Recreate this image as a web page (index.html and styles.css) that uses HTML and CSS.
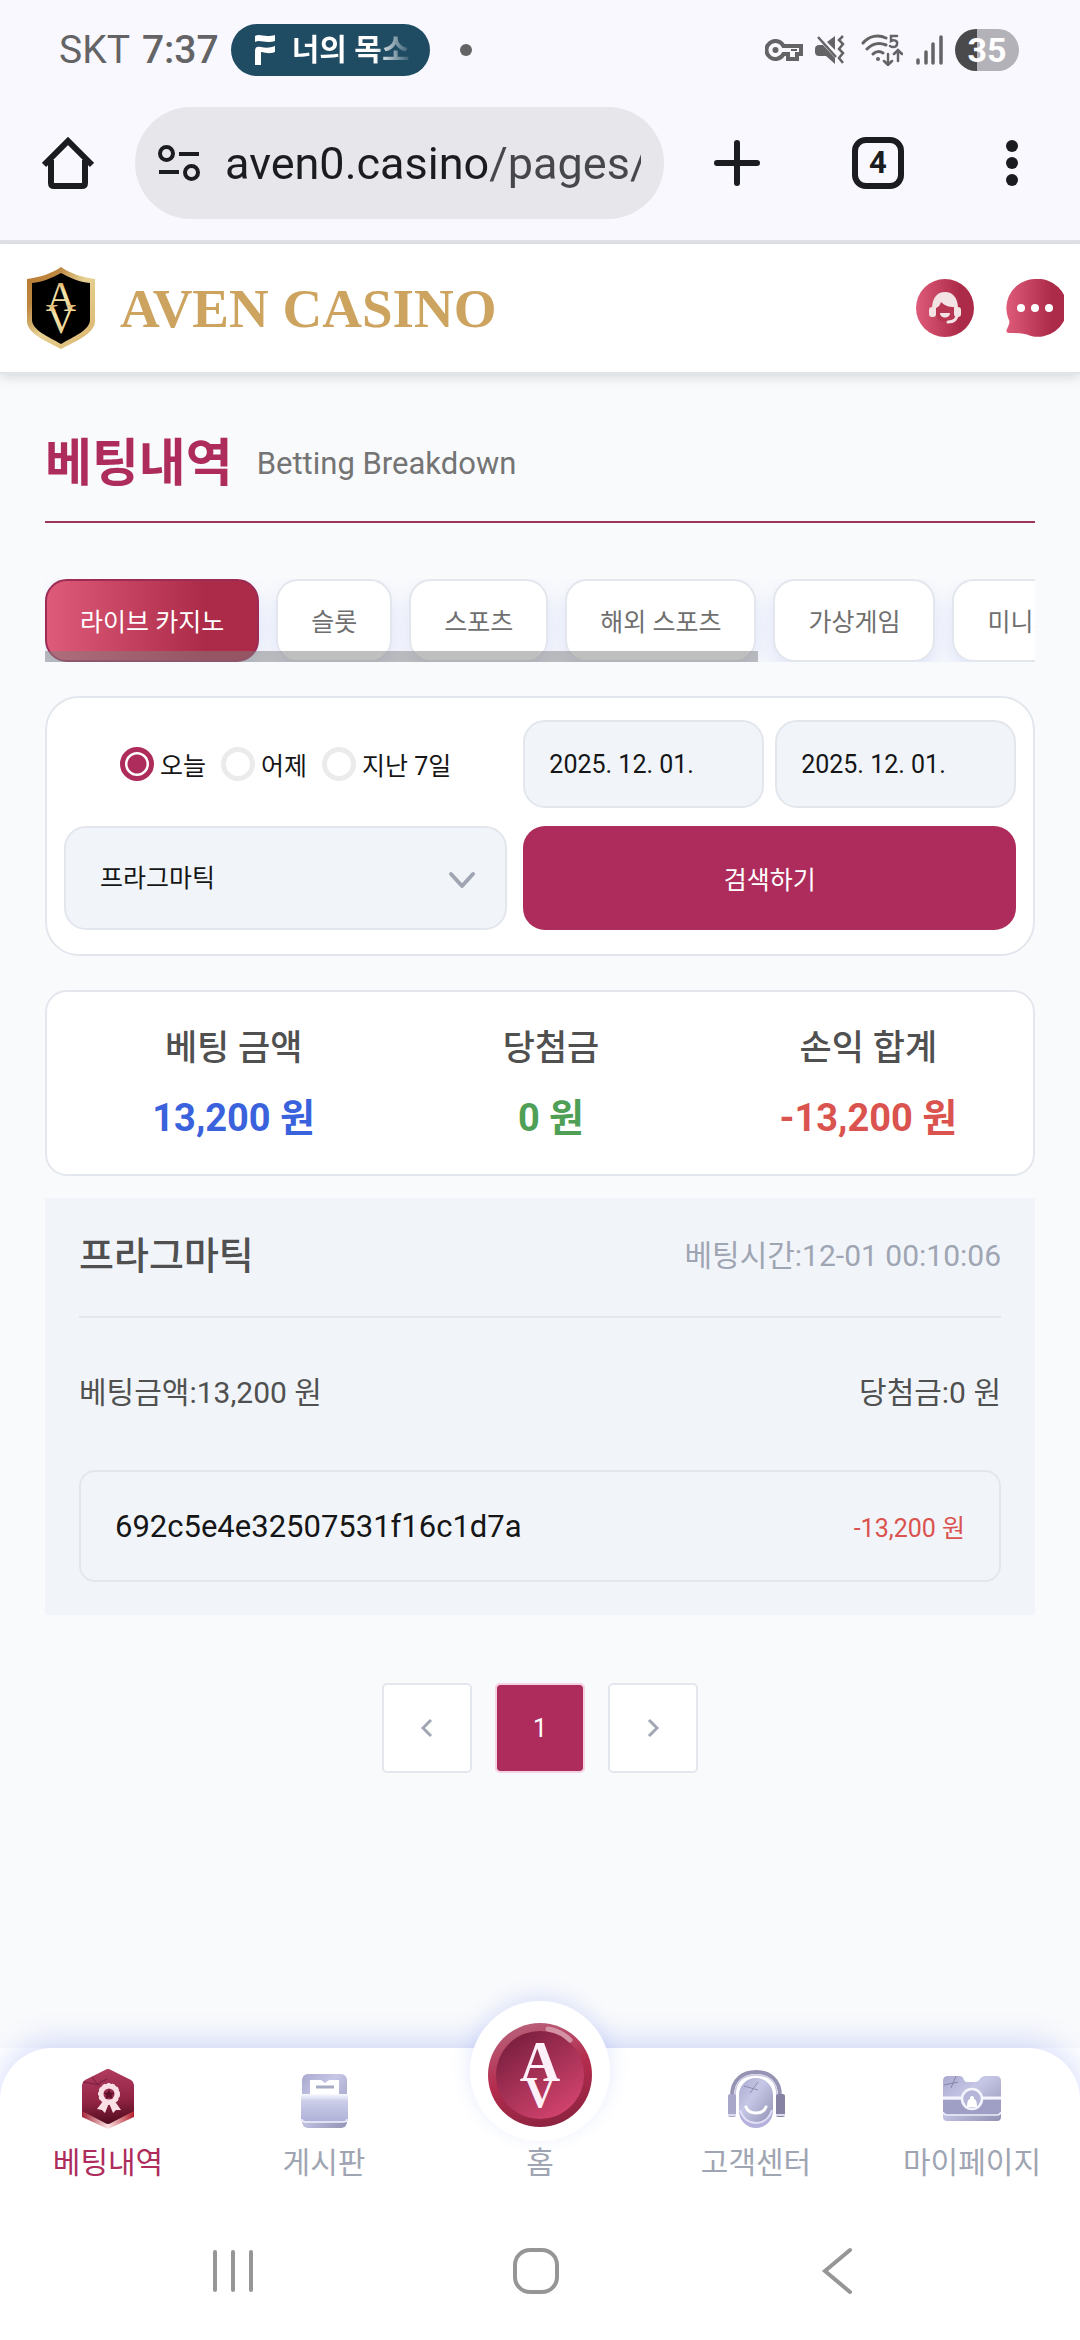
FILE: index.html
```html
<!DOCTYPE html>
<html lang="ko">
<head>
  <meta charset="UTF-8" />
  <meta name="viewport" content="width=device-width, initial-scale=1.0" />
  <title>베팅내역 - AVEN CASINO</title>
  <link rel="stylesheet" href="styles.css">
</head>
<body>
  <!-- Phone status bar -->
  <div class="status-bar">
    <span class="carrier">SKT</span>
    <span class="clock">7:37</span>
    <div class="chip">
      <svg width="22" height="32" viewBox="0 0 22 32" fill="#fff">
        <path d="M1 2c5-3 9 2 20-1v6c-10 3-15-2-20 1z"/>
        <path d="M1 17c0-4 2-5 6-4 5 1 9 1 14-1v6c-5 2-9 1-13 0-1 0-1 0-1 1v12H1z"/>
      </svg>
      <span class="chip-text">너의 목소</span>
    </div>
    <span class="dot"></span>

    <div class="status-icons">
      <svg width="38" height="22" viewBox="0 0 38 22" fill="none" stroke="#646466" stroke-width="4">
        <path d="M18.500 7A9 9 0 1 0 18.500 15H23V20H32V15H36V7Z"/>
        <circle cx="10.500" cy="11" r="3" fill="#646466" stroke="none"/>
        <path d="M26 11h6" stroke-width="2"/>
      </svg>
      <svg class="icon-mute" width="30" height="30" viewBox="0 0 30 30" fill="#646466">
        <path d="M0 14c0-3 2-4 4-4h4l12 13v6l-9-8H4c-2 0-4-1-4-4z"/>
        <path d="M20 1v14l-8-8z"/>
        <path d="M3 2l18 20" stroke="#646466" stroke-width="2.500"/>
        <path d="M28 1l-4 4 4 4-4 5 4 4-4 5 4 5" fill="none" stroke="#646466" stroke-width="2.500"/>
      </svg>
      <svg class="icon-wifi" width="42" height="32" viewBox="0 0 42 32" fill="none" stroke="#646466" stroke-width="3" stroke-linecap="round">
        <path d="M2 9C8 2 17 0 25 4M6 15c5-5 12-7 19-4M12 20c3-3 7-3 10-1"/>
        <circle cx="17" cy="25" r="2" fill="#646466" stroke="none"/>
        <path d="M36 2h-6v5c3-2 7 0 6 3 0 3-4 4-7 2" stroke-width="2.500"/>
        <path d="M27 20v10m-4-3l4 4 4-4M37 27V17m-4 3l4-4 4 4" stroke-width="2.500"/>
      </svg>
      <svg width="28" height="30" viewBox="0 0 28 30" stroke="#646466" stroke-width="3.500" stroke-linecap="round">
        <path d="M3 25v3M11 17v11M18 9v19M26 2v26"/>
      </svg>
      <span class="battery">35</span>
    </div>
  </div>

  <!-- Browser toolbar -->
  <div class="toolbar">
    <button class="icon-btn" aria-label="Home">
      <svg width="52" height="52" viewBox="0 0 52 52" fill="none" stroke="#1b1c20" stroke-width="6">
        <path d="M2 28L26 4l24 24" stroke-linejoin="miter"/>
        <path d="M9 23v23q0 3 3 3h28q3 0 3-3V23"/>
      </svg>
    </button>
    <div class="url-bar">
      <svg width="42" height="38" viewBox="0 0 42 38" fill="none" stroke="#1b1c20" stroke-width="4">
        <circle cx="8.500" cy="9.500" r="6.500"/>
        <path d="M21 10h20M1 28h20"/>
        <circle cx="33.500" cy="28.500" r="6.500"/>
      </svg>
      <input class="url" type="text" aria-label="Address" value="aven0.casino/pages/" />
    </div>
    <div class="toolbar-actions">
      <button class="icon-btn" aria-label="New tab">
        <svg width="46" height="46" viewBox="0 0 46 46" stroke="#1b1c20" stroke-width="6" stroke-linecap="round">
          <path d="M23 3v40M3 23h40"/>
        </svg>
      </button>
      <button class="tab-count" aria-label="Tabs">4</button>
      <button class="icon-btn" aria-label="Menu">
        <svg width="32" height="52" viewBox="0 0 32 52" fill="#1b1c20">
          <circle cx="16" cy="9" r="6"/>
          <circle cx="16" cy="26" r="6"/>
          <circle cx="16" cy="43" r="6"/>
        </svg>
      </button>
    </div>
  </div>

  <!-- Site header -->
  <header class="header">
    <a class="brand" href="#">
      <svg width="70" height="84" viewBox="0 0 70 84">
        <defs>
          <linearGradient id="gold" x1="0" y1="0" x2="1" y2="1">
            <stop offset="0" stop-color="#b87a30"/>
            <stop offset=".25" stop-color="#bd8740"/>
            <stop offset=".5" stop-color="#e6d193"/>
            <stop offset="1" stop-color="#d9b26a"/>
          </linearGradient>
          <linearGradient id="goldText" x1="0" y1="0" x2="0" y2="1">
            <stop offset="0" stop-color="#c98b3d"/>
            <stop offset=".4" stop-color="#f5e6ab"/>
            <stop offset="1" stop-color="#e3c985"/>
          </linearGradient>
        </defs>
        <path d="M35 1C25 8 14 11 1 13v42c0 13 21 21 34 28 13-7 34-15 34-28V13C56 11 45 8 35 1z" fill="url(#gold)"/>
        <path d="M35 7c-9 5-18 9-29 10v37c0 10 17 17 29 24 12-7 29-14 29-24V17C53 16 44 12 35 7z" fill="#000"/>
        <text x="35" y="45" class="mark mark-gold">A</text>
        <text x="35" y="67" class="mark mark-gold">V</text>
      </svg>
      <span class="brand-name">AVEN CASINO</span>
    </a>
    <div class="header-actions">
      <button class="icon-btn" aria-label="상담">
        <svg width="58" height="58" viewBox="0 0 58 58">
          <defs>
            <linearGradient id="rose" x1="0" y1="0" x2="1" y2="0">
              <stop offset="0" stop-color="#de5b79"/>
              <stop offset=".75" stop-color="#ac2b48"/>
            </linearGradient>
          </defs>
          <circle cx="29" cy="29" r="29" fill="url(#rose)"/>
          <path d="M16 30c0-11 5-17 13-17s13 6 13 17" fill="#f3e3e4"/>
          <path d="M20 29c3-1 4-3 5-6 4 4 8 5 13 5v6c0 6-4 9-9 9s-9-3-9-9z" fill="#b73652"/>
          <rect x="13" y="28" width="7" height="10" rx="3" fill="#f3e3e4"/>
          <rect x="38" y="28" width="7" height="10" rx="3" fill="#f3e3e4"/>
          <path d="M24 34h10c0 6-10 6-10 0z" fill="#f3e3e4"/>
          <path d="M41 35c0 6-4 8-9 8" fill="none" stroke="#f3e3e4" stroke-width="3" stroke-linecap="round"/>
        </svg>
      </button>
      <button class="icon-btn" aria-label="메시지">
        <svg width="58" height="58" viewBox="0 0 58 58">
          <path d="M29 0a29 29 0 1 1-4 57c-8-3-15-3-22-3-3 0-3-2-2-4 2-4 3-7 2-9A29 29 0 0 1 29 0z" fill="url(#rose)"/>
          <g fill="#fff">
            <circle cx="15" cy="29" r="4"/>
            <circle cx="29" cy="29" r="4"/>
            <circle cx="43" cy="29" r="4"/>
          </g>
        </svg>
      </button>
    </div>
  </header>

  <main class="content">
    <div class="page-title">
      <h1>베팅내역</h1>
      <span>Betting Breakdown</span>
    </div>

    <div class="tabs-wrap">
      <div class="tabs">
        <button class="tab active">라이브 카지노</button>
        <button class="tab">슬롯</button>
        <button class="tab">스포츠</button>
        <button class="tab">해외 스포츠</button>
        <button class="tab">가상게임</button>
        <button class="tab">미니게임</button>
      </div>
      <div class="scroll-thumb"></div>
    </div>

    <form class="card filter" onsubmit="return false">
      <div class="range">
        <label><input type="radio" name="range" checked />오늘</label>
        <label><input type="radio" name="range" />어제</label>
        <label><input type="radio" name="range" />지난 7일</label>
      </div>
      <div class="dates">
        <input type="text" class="field date" aria-label="시작일" value="2025. 12. 01." />
        <input type="text" class="field date" aria-label="종료일" value="2025. 12. 01." />
      </div>
      <div class="select-wrap">
        <select class="field" aria-label="게임사">
          <option>프라그마틱</option>
        </select>
        <svg class="arrow" width="28" height="18" viewBox="0 0 28 18" fill="none" stroke="#9fa5b2" stroke-width="4" stroke-linecap="round" stroke-linejoin="round">
          <path d="M3 3l11 12L25 3"/>
        </svg>
      </div>
      <button class="search-btn" type="submit">검색하기</button>
    </form>

    <section class="card summary">
      <div>
        <h2>베팅 금액</h2>
        <p class="blue">13,200 원</p>
      </div>
      <div>
        <h2>당첨금</h2>
        <p class="green">0 원</p>
      </div>
      <div>
        <h2>손익 합계</h2>
        <p class="red">-13,200 원</p>
      </div>
    </section>

    <section class="record">
      <div class="record-head">
        <h3>프라그마틱</h3>
        <span>베팅시간:12-01 00:10:06</span>
      </div>
      <div class="record-row">
        <span>베팅금액:13,200 원</span>
        <span>당첨금:0 원</span>
      </div>
      <div class="record-id">
        <span>692c5e4e32507531f16c1d7a</span>
        <span class="loss">-13,200 원</span>
      </div>
    </section>

    <nav class="pagination" aria-label="페이지">
      <button aria-label="이전">
        <svg width="12" height="20" viewBox="0 0 12 20"><path d="M10 2L2 10l8 8"/></svg>
      </button>
      <button class="current">1</button>
      <button aria-label="다음">
        <svg width="12" height="20" viewBox="0 0 12 20"><path d="M2 2l8 8-8 8"/></svg>
      </button>
    </nav>
  </main>

  <footer class="footer">
    <nav class="bottom-nav">
      <a href="#" class="active">
        <svg width="60" height="62" viewBox="0 0 60 62">
          <defs>
            <linearGradient id="hex" x1=".4" y1="0" x2=".5" y2="1">
              <stop offset="0" stop-color="#b03c60"/>
              <stop offset=".55" stop-color="#942545"/>
              <stop offset="1" stop-color="#520c1f"/>
            </linearGradient>
            <linearGradient id="hexEdge" x1="0" y1="0" x2="1" y2="0">
              <stop offset="0" stop-color="#a32438"/>
              <stop offset=".5" stop-color="#fbe3e4"/>
              <stop offset="1" stop-color="#b3202c"/>
            </linearGradient>
          </defs>
          <path d="M4 42v8l26 12 26-12v-8z" fill="url(#hexEdge)"/>
          <path d="M27 3q3-2 6 0l20 10q3 2 3 5v26L33 56q-3 2-6 0L4 44V18q0-3 3-5z" fill="url(#hex)"/>
          <path d="M5 15l17 3M14 10l5 7 10-5" fill="none" stroke="#742040" stroke-width="1"/>
          <path d="M26 33l-7 9 5 1 3 3 4-10 4 10 3-3 5 0-7-10z" fill="#fadfe6"/>
          <circle cx="31" cy="27" r="8" fill="none" stroke="#fadfe6" stroke-width="5"/>
          <circle cx="31" cy="27" r="10" fill="none" stroke="#fadfe6" stroke-width="2" stroke-dasharray="3 2"/>
          <path d="M31 22l1.500 3.500 4 .3-3 2.500 1 3.700-3.500-2-3.500 2 1-3.700-3-2.500 4-.3z" fill="#5e1029"/>
        </svg>
        <span>베팅내역</span>
      </a>
      <a href="#">
        <svg width="60" height="62" viewBox="0 0 60 62">
          <defs>
            <linearGradient id="lav" x1="0" y1="0" x2="1" y2="1">
              <stop offset="0" stop-color="#a9a9cf"/>
              <stop offset=".4" stop-color="#c6c7e6"/>
              <stop offset="1" stop-color="#9191b4"/>
            </linearGradient>
            <linearGradient id="lavFront" x1="0" y1="0" x2="0" y2="1">
              <stop offset="0" stop-color="#fafaff"/>
              <stop offset=".25" stop-color="#cbcde9"/>
              <stop offset="1" stop-color="#aeb0d8"/>
            </linearGradient>
          </defs>
          <rect x="8" y="7" width="45" height="54" rx="6" fill="url(#lav)"/>
          <path d="M16 13h11l4 3 4-3h10v18H16z" fill="#fff"/>
          <path d="M22 20h18" stroke="#a8abc4" stroke-width="3"/>
          <path d="M7 27h47v25q0 3-4 3H11q-4 0-4-3z" fill="url(#lavFront)"/>
          <path d="M8 52q0 3 4 3h37q4 0 4-3" fill="none" stroke="#f2f2fc" stroke-width="1.500"/>
        </svg>
        <span>게시판</span>
      </a>
      <a href="#" class="home">
        <span class="home-button">
          <svg width="104" height="106" viewBox="0 0 104 106">
            <defs>
              <linearGradient id="rim" x1=".3" y1="0" x2=".6" y2="1">
                <stop offset="0" stop-color="#b9617c"/>
                <stop offset=".5" stop-color="#b42c4d"/>
                <stop offset="1" stop-color="#8c2340"/>
              </linearGradient>
              <linearGradient id="coin" x1="0" y1="0" x2=".7" y2="1">
                <stop offset="0" stop-color="#6e1a38"/>
                <stop offset="1" stop-color="#d2436e"/>
              </linearGradient>
            </defs>
            <circle cx="52" cy="53" r="52" fill="url(#rim)"/>
            <circle cx="52" cy="53" r="44" fill="url(#coin)"/>
            <path d="M60 7q13 2 22 11" fill="none" stroke="#d493a5" stroke-width="5" stroke-linecap="round"/>
            <text x="52" y="59" class="mark mark-home">A</text>
            <text x="52" y="85" class="mark mark-home-v">V</text>
          </svg>
        </span>
        <span>홈</span>
      </a>
      <a href="#">
        <svg width="60" height="62" viewBox="0 0 60 62">
          <path d="M6 29C6 12 17 5 30 5s24 7 24 24" fill="none" stroke="#9694b4" stroke-width="4"/>
          <path d="M9 29C9 14 18 8 30 8s21 6 21 21" fill="none" stroke="#c9c7e2" stroke-width="1.500"/>
          <rect x="2" y="27" width="8" height="23" rx="2" fill="#a8a6c9"/>
          <rect x="50" y="27" width="9" height="23" rx="2" fill="#8582a3"/>
          <path d="M2 48h8M50 48h9" stroke="#deddf0" stroke-width="2"/>
          <rect x="13" y="15" width="34" height="46" rx="17" fill="#b3b0dc"/>
          <rect x="13" y="11" width="34" height="46" rx="17" fill="url(#lav)"/>
          <path d="M14 43c3 9 9 13 16 13s13-4 16-13" fill="none" stroke="#e0def5" stroke-width="2"/>
          <path d="M18 19l14 4M24 26l8-11" stroke="#8f8db0" stroke-width="1"/>
          <path d="M20 40c3 8 17 8 20 0" fill="none" stroke="#fff" stroke-width="3" stroke-linecap="round"/>
        </svg>
        <span>고객센터</span>
      </a>
      <a href="#">
        <svg width="60" height="62" viewBox="0 0 60 62">
          <path d="M1 14q0-5 5-5h11q4 0 5 4 1 2 3 2h9q2 0 4-3 2-3 5-3h11q5 0 5 5v36q0 4-4 4H5q-4 0-4-4z" fill="url(#lav)"/>
          <path d="M1 33h58v11q0 3-4 3H5q-4 0-4-3z" fill="#9f9fc6"/>
          <path d="M1 31h58" stroke="#f4f4fd" stroke-width="3"/>
          <path d="M1 45q1 3 4 3h50q3 0 4-3" fill="none" stroke="#ececf9" stroke-width="1.500"/>
          <path d="M2 18l14-3M9 21l5-12" stroke="#8785aa" stroke-width="1"/>
          <circle cx="30" cy="32" r="10" fill="#b5b5d9" stroke="#f4f4fd" stroke-width="2.500"/>
          <path d="M25 40c0-5 1-8 3-8-1-4 5-4 4 0 2 0 3 3 3 8z" fill="#fff"/>
        </svg>
        <span>마이페이지</span>
      </a>
    </nav>

    <!-- Phone navigation keys -->
    <div class="system-nav">
      <button class="icon-btn" aria-label="Recents">
        <svg width="48" height="48" viewBox="0 0 48 48"><path d="M6 5v38M24 5v38M42 5v38"/></svg>
      </button>
      <button class="icon-btn" aria-label="Home">
        <svg width="48" height="48" viewBox="0 0 48 48"><rect x="3" y="3" width="42" height="42" rx="15"/></svg>
      </button>
      <button class="icon-btn" aria-label="Back">
        <svg width="48" height="48" viewBox="0 0 48 48"><path d="M36 3L11 24l25 21"/></svg>
      </button>
    </div>
  </footer>
</body>
</html>
```
FILE: styles.css
```css
* {
  box-sizing: border-box;
}

body {
  margin: 0;
  min-height: 100vh;
  display: flex;
  flex-direction: column;
  background: #f9fafc;
  color: #161616;
  font-family: Roboto, "Noto Sans CJK KR", sans-serif;
  font-size: 25px;
}

h1, h2, h3, p {
  margin: 0;
}

button, input, select {
  font-family: inherit;
  font-size: inherit;
  color: inherit;
}

a {
  color: inherit;
  text-decoration: none;
}

svg {
  display: block;
  flex-shrink: 0;
}

.icon-btn {
  padding: 0;
  border: none;
  background: none;
  cursor: pointer;
}

/* Status bar */
.status-bar {
  height: 100px;
  padding: 0 61px 0 59px;
  display: flex;
  align-items: center;
  background: #faf8ff;
  color: #646466;
  font-size: 39px;
}

.clock {
  margin: 0 12px;
  font-weight: 500;
}

.chip {
  width: 199px;
  height: 52px;
  padding: 0 20px 0 23px;
  display: flex;
  align-items: center;
  gap: 16px;
  border-radius: 26px;
  background: #1f4b63;
}

.chip-text {
  flex: 1;
  white-space: nowrap;
  font-size: 30px;
  font-weight: bold;
  line-height: 52px;
  color: transparent;
  background: linear-gradient(to right, #fff 70%, rgba(255,255,255,0.1));
  -webkit-background-clip: text;
  background-clip: text;
}

.dot {
  width: 12px;
  height: 12px;
  margin-left: 30px;
  border-radius: 50%;
  background: #646466;
}

.status-icons {
  margin-left: auto;
  display: flex;
  align-items: center;
  gap: 12px;
}

.icon-wifi {
  margin-left: 4px;
}

.battery {
  width: 64px;
  height: 42px;
  border-radius: 21px;
  background: linear-gradient(to right, #4a4a4c 22px, #b3b2b8 22px);
  color: #fff;
  font-size: 34px;
  font-weight: bold;
  line-height: 42px;
  text-align: center;
}

/* Browser toolbar */
.toolbar {
  padding: 7px 52px 21px 42px;
  display: flex;
  align-items: center;
  background: #faf8ff;
  border-bottom: 4px solid #e1e2e7;
}

.url-bar {
  flex: 1;
  min-width: 0;
  height: 112px;
  margin: 0 50px 0 41px;
  padding: 0 23px;
  display: flex;
  align-items: center;
  gap: 25px;
  border-radius: 56px;
  background: #e7e6eb;
}

.url {
  flex: 1;
  min-width: 0;
  padding: 0;
  border: none;
  outline: none;
  font-size: 45px;
  color: transparent;
  background: linear-gradient(to right, #1b1c20 264px, #46474b 264px);
  -webkit-background-clip: text;
  background-clip: text;
}

.toolbar-actions {
  display: flex;
  align-items: center;
  gap: 92px;
}

.tab-count {
  width: 52px;
  height: 52px;
  padding: 0;
  border: 6px solid #1b1c20;
  border-radius: 14px;
  background: none;
  color: #1b1c20;
  font-size: 31px;
  font-weight: bold;
  line-height: 40px;
}

/* Header */
.header {
  position: relative;
  height: 130px;
  padding: 0 16px 0 26px;
  display: flex;
  align-items: center;
  justify-content: space-between;
  background: #fff;
  border-bottom: 2px solid #e0e4ea;
  box-shadow: 0 4px 10px rgba(0,0,0,0.12);
}

.brand {
  display: flex;
  align-items: center;
  gap: 24px;
}

.brand-name {
  font-family: "Liberation Serif", serif;
  font-size: 55px;
  font-weight: bold;
  color: #cda45f;
}

.mark {
  font-family: "Liberation Serif", serif;
  text-anchor: middle;
}

.mark-gold {
  font-size: 42px;
  fill: url(#goldText);
}

.mark-home {
  font-size: 56px;
  font-weight: bold;
  fill: #fdf0f8;
}

.mark-home-v {
  font-size: 44px;
  font-weight: bold;
  fill: #fdf0f8;
}

.header-actions {
  display: flex;
  gap: 32px;
}

/* Content */
.content {
  flex: 1;
  padding: 58px 45px 0;
}

.page-title {
  display: flex;
  align-items: center;
  gap: 24px;
  padding-bottom: 25px;
  border-bottom: 2px solid #9c355b;
  line-height: 64px;
}

.page-title h1 {
  font-size: 51px;
  font-weight: bold;
  color: #ae2c5b;
}

.page-title span {
  font-size: 31px;
  color: #747474;
}

.tabs-wrap {
  position: relative;
  margin-top: 56px;
}

.tabs {
  display: flex;
  gap: 17px;
  overflow: hidden;
}

.tab {
  flex-shrink: 0;
  height: 83px;
  padding: 0 33px 2px;
  border: 2px solid #e3e7ed;
  border-radius: 22px;
  background: #fff;
  color: #6f6f6f;
  box-shadow: 0 10px 20px rgba(60,90,230,0.14);
  cursor: pointer;
}

.tab.active {
  border-color: #9c2c55;
  background: linear-gradient(to right, #de5b79, #ac2b48 75%);
  color: #fff;
}

/* horizontal scroll indicator over the tabs */
.scroll-thumb {
  position: absolute;
  left: 0;
  bottom: 0;
  width: 72%;
  height: 11px;
  background: rgba(128,128,128,0.5);
}

.card {
  margin-top: 34px;
  border: 2px solid #e3e7ed;
  border-radius: 22px;
  background: #fff;
}

/* Filter */
.filter {
  display: grid;
  grid-template-columns: 9fr 10fr;
  gap: 18px 16px;
  padding: 22px 17px 24px;
  border-radius: 34px;
}

.range {
  display: flex;
  align-items: center;
  justify-content: center;
  gap: 15px;
}

.range label {
  display: flex;
  align-items: center;
  gap: 6px;
}

.range input {
  appearance: none;
  width: 34px;
  height: 34px;
  margin: 0;
  border: 5px solid #ebebeb;
  border-radius: 50%;
  background: #fff;
}

.range input:checked {
  border-color: #ae2c5b;
  background: radial-gradient(circle, #ae2c5b 9px, #fff 10px);
}

.dates {
  display: grid;
  grid-template-columns: 1fr 1fr;
  gap: 11px;
}

.field {
  width: 100%;
  min-width: 0;
  height: 104px;
  padding: 0 34px;
  border: 2px solid #e3e7ed;
  border-radius: 22px;
  background: #f1f5fa;
  color: #161616;
  outline: none;
  appearance: none;
}

.date {
  height: 88px;
  padding: 0 24px;
}

.select-wrap {
  position: relative;
}

.arrow {
  position: absolute;
  right: 31px;
  top: 45px;
  pointer-events: none;
}

.search-btn {
  border: none;
  border-radius: 22px;
  background: #ae2c5b;
  color: #fff;
  cursor: pointer;
}

/* Summary */
.summary {
  display: grid;
  grid-template-columns: repeat(3, 1fr);
  padding: 32px 6px 31px 28px;
  text-align: center;
  line-height: 50px;
}

.summary h2 {
  margin-bottom: 19px;
  font-size: 35px;
  font-weight: 500;
  color: #505050;
}

.summary p {
  font-size: 38px;
  font-weight: bold;
}

.blue {
  color: #3a62dc;
}

.green {
  color: #4fa056;
}

.red, .loss {
  color: #da534e;
}

/* Record */
.record {
  margin-top: 22px;
  padding: 34px 34px 33px;
  background: #f1f5fa;
  color: #505050;
  font-size: 30px;
}

.record-head {
  display: flex;
  align-items: center;
  justify-content: space-between;
  padding-bottom: 36px;
  border-bottom: 2px solid #e3e7ed;
  line-height: 48px;
}

.record-head h3 {
  font-size: 38px;
  font-weight: 500;
}

.record-head span {
  color: #9fa5b2;
}

.record-row {
  display: flex;
  justify-content: space-between;
  padding: 55px 0 57px;
  line-height: 40px;
}

.record-id {
  height: 112px;
  padding: 0 34px;
  display: flex;
  align-items: center;
  justify-content: space-between;
  border: 2px solid #e3e7ed;
  border-radius: 16px;
  font-size: 31px;
  color: #161616;
}

.record-id .loss {
  font-size: 25px;
  color: #da534e;
}

/* Pagination */
.pagination {
  margin-top: 68px;
  display: flex;
  justify-content: center;
  gap: 23px;
}

.pagination button {
  width: 90px;
  height: 90px;
  padding: 0;
  display: flex;
  align-items: center;
  justify-content: center;
  border: 2px solid #e3e7ed;
  border-radius: 5px;
  background: #fff;
  cursor: pointer;
}

.pagination .current {
  border-color: #f3d3e2;
  background: #ae2c5b;
  background-clip: padding-box;
  color: #fff;
}

.pagination path {
  fill: none;
  stroke: #9fa5b2;
  stroke-width: 3;
}

/* Bottom navigation */
.footer {
  background: #fff;
}

.bottom-nav {
  height: 154px;
  display: flex;
  border-radius: 52px 52px 0 0;
  background: #fff;
  box-shadow: 0 -6px 30px rgba(60,90,230,0.22);
}

.bottom-nav a {
  position: relative;
  flex: 1;
  padding: 19px 0;
  display: flex;
  flex-direction: column;
  align-items: center;
  justify-content: space-between;
  font-size: 30px;
  line-height: 40px;
  color: #9fa5b2;
}

.bottom-nav .active {
  color: #ae2c5b;
}

.bottom-nav .home {
  justify-content: flex-end;
}

/* round button that rises above the bar */
.home-button {
  position: absolute;
  top: -47px;
  left: 50%;
  width: 140px;
  height: 140px;
  margin-left: -70px;
  padding: 21px 18px;
  border-radius: 50%;
  background: #fff;
  box-shadow: 0 -6px 20px rgba(60,90,230,0.14);
}

.system-nav {
  height: 138px;
  padding: 0 218px 0 209px;
  display: flex;
  align-items: center;
  justify-content: space-between;
  background: #fff;
}

.system-nav svg {
  fill: none;
  stroke: #969696;
  stroke-width: 4;
  stroke-linecap: round;
}
```
